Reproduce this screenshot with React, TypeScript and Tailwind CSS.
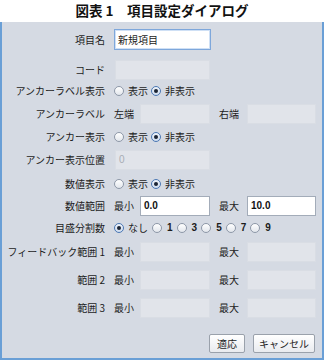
import React from 'react'

const FONT = { fontFamily: '"Noto Sans CJK JP", "Noto Sans", sans-serif' }

function Label({ children }: { children: React.ReactNode }) {
  return <div className="w-[103px] shrink-0 text-right whitespace-nowrap">{children}</div>
}

function Radio({ checked }: { checked?: boolean }) {
  return (
    <span
      className={
        checked
          ? 'flex h-[10px] w-[10px] shrink-0 items-center justify-center rounded-full border border-[#4b78b4] bg-gradient-to-b from-[#eef3fa] to-[#cfdcee]'
          : 'flex h-[10px] w-[10px] shrink-0 items-center justify-center rounded-full border border-[#8e98a8] bg-gradient-to-b from-white to-[#e2e6ec]'
      }
    >
      {checked && <span className="h-[4px] w-[4px] rounded-full bg-[#1b2433]" />}
    </span>
  )
}

function ShowHide() {
  return (
    <div className="flex items-center">
      <Radio />
      <span className="ml-[4px]">表示</span>
      <span className="ml-[3px]">
        <Radio checked />
      </span>
      <span className="ml-[4px]">非表示</span>
    </div>
  )
}

function Field({ value, white, muted, className }: { value?: string; white?: boolean; muted?: boolean; className: string }) {
  return (
    <div
      className={
        (white
          ? 'border-[#a3acb9] bg-white font-bold text-[#111] '
          : 'border-[#d9dde4] bg-[#e1e4ea] ') +
        'flex h-[20px] items-center border px-[3px] text-[10px] ' +
        (muted ? 'text-[#a8adb5] ' : '') +
        className
      }
      style={{ fontFamily: '"Liberation Sans", Arial, sans-serif' }}
    >
      {value}
    </div>
  )
}

function MinMax({ left, right, white, a, b }: { left: string; right: string; white?: boolean; a?: string; b?: string }) {
  return (
    <div className="flex items-center">
      <span className="w-[26px]">{left}</span>
      <Field white={white} value={a} className="w-[70px]" />
      <span className="ml-[9px] w-[28px]">{right}</span>
      <Field white={white} value={b} className="w-[69px]" />
    </div>
  )
}

export default function App() {
  const ticks = ['1', '3', '5', '7', '9']
  return (
    <div className="h-[360px] w-[324px] bg-white text-[10px] leading-none text-[#1c1c1c]" style={FONT}>
      <div className="flex h-[22px] items-center justify-center text-[13.5px] font-bold text-[#111]">
        図表 1　項目設定ダイアログ
      </div>

      <div className="flex h-[338px] flex-col border-x-2 border-b-2 border-[#6a9fd6] bg-[#d5dae3] pt-[7px]">
        <div className="flex h-[21px] items-center gap-[9px]">
          <Label>項目名</Label>
          <div className="flex h-[21px] w-[97px] items-center border border-[#7ea7db] bg-white px-[3px] shadow-[inset_0_0_0_1px_#cfe0f5]">
            新規項目
          </div>
        </div>

        <div className="mt-[10px] flex h-[20px] items-center gap-[9px]">
          <Label>コード</Label>
          <Field className="ml-px w-[95px]" />
        </div>

        <div className="mt-[1px] flex h-[20px] items-center gap-[9px]">
          <Label>アンカーラベル表示</Label>
          <ShowHide />
        </div>

        <div className="mt-[3px] flex h-[20px] items-center gap-[9px]">
          <Label>アンカーラベル</Label>
          <MinMax left="左端" right="右端" />
        </div>

        <div className="mt-[3px] flex h-[20px] items-center gap-[9px]">
          <Label>アンカー表示</Label>
          <ShowHide />
        </div>

        <div className="mt-[3px] flex h-[20px] items-center gap-[9px]">
          <Label>アンカー表示位置</Label>
          <Field className="ml-px w-[95px]" value="0" muted />
        </div>

        <div className="mt-[4px] flex h-[20px] items-center gap-[9px]">
          <Label>数値表示</Label>
          <ShowHide />
        </div>

        <div className="mt-[2px] flex h-[20px] items-center gap-[9px]">
          <Label>数値範囲</Label>
          <MinMax left="最小" right="最大" white a="0.0" b="10.0" />
        </div>

        <div className="mt-[2px] flex h-[20px] items-center gap-[9px]">
          <Label>目盛分割数</Label>
          <div className="flex items-center">
            <Radio checked />
            <span className="ml-[4px]">なし</span>
            {ticks.map((t) => (
              <React.Fragment key={t}>
                <span className="ml-[4px]">
                  <Radio />
                </span>
                <span className="ml-[5px] font-bold" style={{ fontFamily: '"Liberation Sans", Arial, sans-serif' }}>
                  {t}
                </span>
              </React.Fragment>
            ))}
          </div>
        </div>

        <div className="mt-[4px] flex h-[20px] items-center gap-[9px]">
          <Label>フィードバック範囲 1</Label>
          <MinMax left="最小" right="最大" />
        </div>

        <div className="mt-[8px] flex h-[20px] items-center gap-[9px]">
          <Label>範囲 2</Label>
          <MinMax left="最小" right="最大" />
        </div>

        <div className="mt-[8px] flex h-[20px] items-center gap-[9px]">
          <Label>範囲 3</Label>
          <MinMax left="最小" right="最大" />
        </div>

        <div className="mt-auto mb-[5px] flex justify-end gap-[8px] pr-[7px]">
          <button className="flex h-[19px] w-[36px] items-center justify-center rounded-[2px] border border-[#9aa1ab] bg-gradient-to-b from-white to-[#e9ebef]">
            適応
          </button>
          <button className="flex h-[19px] w-[62px] items-center justify-center rounded-[2px] border border-[#9aa1ab] bg-gradient-to-b from-white to-[#e9ebef]">
            キャンセル
          </button>
        </div>
      </div>
    </div>
  )
}
